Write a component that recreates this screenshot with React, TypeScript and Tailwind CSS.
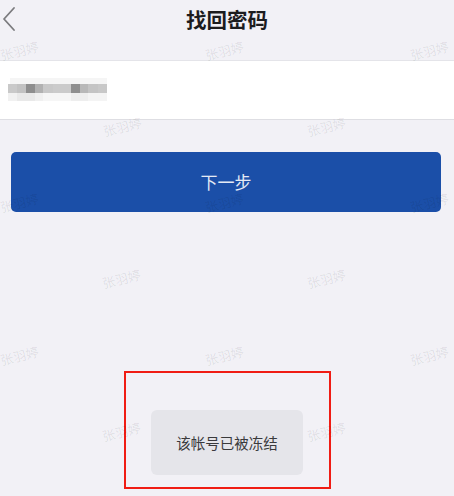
const marks = [
  { x: 0, y: 42 }, { x: 205, y: 42 }, { x: 410, y: 42 },
  { x: 103, y: 118 }, { x: 307, y: 118 },
  { x: 0, y: 194 }, { x: 205, y: 194 }, { x: 410, y: 194 },
  { x: 102, y: 270 }, { x: 307, y: 270 },
  { x: 0, y: 347 }, { x: 205, y: 347 }, { x: 410, y: 347 },
  { x: 102, y: 423 }, { x: 307, y: 423 },
]

// mosaic blocks for the blurred account name: [x, width, colour]
const mid: [number, number, string][] = [
  [0, 9, '#c9c9c9'], [9, 9, '#c2c2c2'], [18, 9, '#8e8e8e'], [27, 8, '#b1b1b1'],
  [35, 10, '#c8c8c8'], [45, 18, '#cbcbcb'], [63, 9, '#8f8f8f'], [72, 8, '#b8b8b8'],
  [80, 10, '#c4c4c4'], [90, 9, '#c8c8c8'],
]
const low: [number, number, string][] = [
  [0, 9, '#f1f1f1'], [9, 18, '#e9e9e9'], [27, 8, '#f0f0f0'], [35, 28, '#f6f6f6'],
  [63, 17, '#eeeeee'], [80, 19, '#f4f4f4'],
]

function Mosaic() {
  return (
    <svg width="100" height="24" viewBox="0 0 100 24">
      <rect x="2" y="0" width="97" height="6" fill="#f5f5f5" />
      {mid.map(([x, w, c], i) => (
        <rect key={'m' + i} x={x} y="6" width={w} height="9" fill={c} />
      ))}
      {low.map(([x, w, c], i) => (
        <rect key={'l' + i} x={x} y="15" width={w} height="8" fill={c} />
      ))}
    </svg>
  )
}

export default function App() {
  return (
    <div
      className="relative h-[496px] w-[454px] overflow-hidden bg-[#f2f1f6]"
      style={{ fontFamily: '"Noto Sans CJK SC", "Noto Sans", sans-serif' }}
    >
      <header className="relative flex h-[61px] items-start justify-center border-b border-[#e4e4e9]">
        <button type="button" aria-label="返回" className="absolute left-0 top-0 p-0">
          <svg width="20" height="38" viewBox="0 0 20 38">
            <path d="M14 8 L4 19 L14 30" fill="none" stroke="#7b7b7e" strokeWidth="1.8" strokeLinecap="round" strokeLinejoin="round" />
          </svg>
        </button>
        <h1 className="pt-[5px] text-[20.5px] font-bold leading-[28px] text-[#1c1c1e]">找回密码</h1>
      </header>

      <div className="flex h-[59px] items-center border-b border-[#dedee3] bg-white pl-[8px]">
        <Mosaic />
      </div>

      <button
        type="button"
        className="mx-[11px] mt-[32px] flex h-[60px] w-[430px] items-center justify-center rounded-[5px] bg-[#1b4fa8] text-[17px] text-[#e4eaf5]"
      >
        下一步
      </button>

      {/* toast with the red annotation frame around it */}
      <div className="pointer-events-none absolute inset-x-0 top-[371px] flex justify-center">
        <div className="flex h-[118px] w-[207px] items-start justify-center border-2 border-[#f01c14] pt-[37px]">
          <div className="flex h-[65px] w-[152px] items-center justify-center rounded-[6px] bg-[#e5e5ea] text-[14.5px] text-[#3a3a3c]">
            该帐号已被冻结
          </div>
        </div>
      </div>

      {marks.map((m, i) => (
        <span
          key={i}
          className="pointer-events-none absolute origin-center -rotate-[14deg] text-[13px] leading-[18px] whitespace-nowrap text-black/[0.085]"
          style={{ left: m.x, top: m.y }}
        >
          张羽婷
        </span>
      ))}
    </div>
  )
}
